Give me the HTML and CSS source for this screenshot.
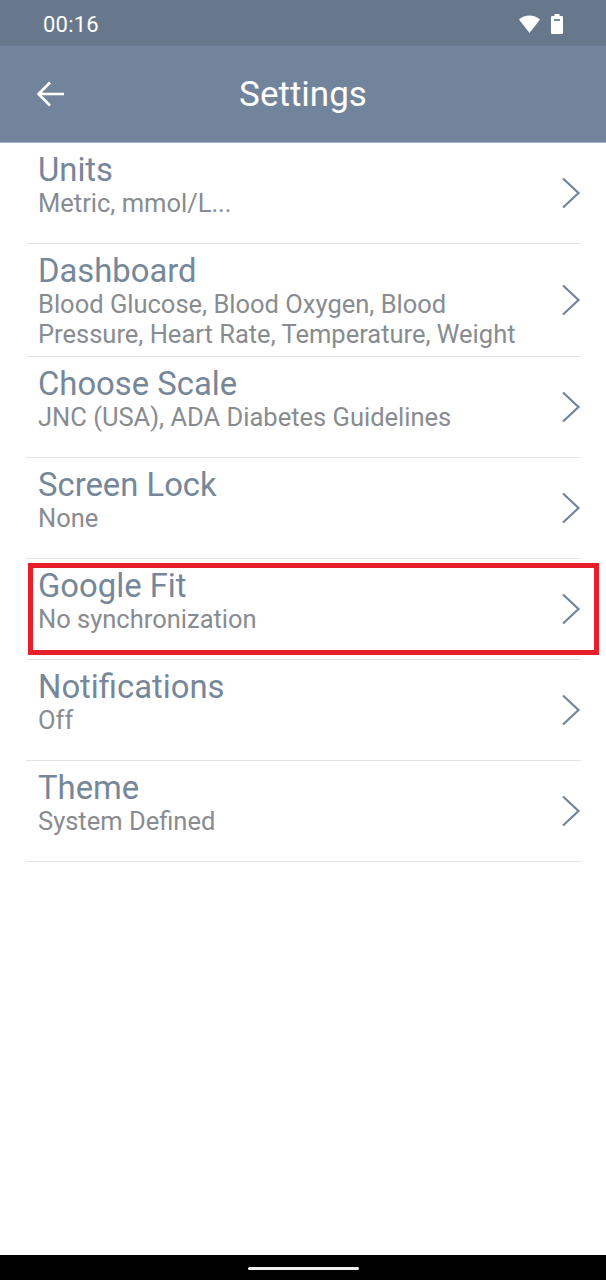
FILE: index.html
```html
<!DOCTYPE html>
<html lang="en">
<head>
<meta charset="utf-8">
<title>Settings</title>
<link rel="stylesheet" href="styles.css">
</head>
<body>
<div class="phone">
  <div class="status">
    <span class="time">00:16</span>
    <span class="status-icons">
      <svg class="wifi" width="21" height="18" viewBox="0 0 21 18"><path d="M0 4.5C3 1.8 6.600.5 10.500.5S18 1.800 21 4.500L10.500 18Z" fill="#fff"/></svg>
      <svg class="battery" width="12" height="20" viewBox="0 0 12 20"><path d="M3.500 0h5v2H11a1 1 0 0 1 1 1v16a1 1 0 0 1-1 1H1a1 1 0 0 1-1-1V3a1 1 0 0 1 1-1h2.500Z" fill="#fff"/><rect x="3" y="5" width="6" height="2" fill="#7d8b9d"/></svg>
    </span>
  </div>
  <header class="appbar">
    <svg class="back" width="30" height="28" viewBox="0 0 30 28"><path d="M28 14H3M14 2.500 2.500 14 14 25.500" fill="none" stroke="#fff" stroke-width="2.600"/></svg>
    <h1 class="title">Settings</h1>
  </header>
  <main class="list">
    <a class="row row-first"><div class="text"><div class="name">Units</div><div class="sub">Metric, mmol/L...</div></div><svg class="chev" width="20" height="32" viewBox="0 0 20 32"><path d="M2 1.500 17.500 16 2 30.500" fill="none" stroke="#72849a" stroke-width="2.200"/></svg></a>
    <a class="row row-tall"><div class="text"><div class="name">Dashboard</div><div class="sub">Blood Glucose, Blood Oxygen, Blood<br>Pressure, Heart Rate, Temperature, Weight</div></div><svg class="chev" width="20" height="32" viewBox="0 0 20 32"><path d="M2 1.500 17.500 16 2 30.500" fill="none" stroke="#72849a" stroke-width="2.200"/></svg></a>
    <a class="row"><div class="text"><div class="name">Choose Scale</div><div class="sub">JNC (USA), ADA Diabetes Guidelines</div></div><svg class="chev" width="20" height="32" viewBox="0 0 20 32"><path d="M2 1.500 17.500 16 2 30.500" fill="none" stroke="#72849a" stroke-width="2.200"/></svg></a>
    <a class="row"><div class="text"><div class="name">Screen Lock</div><div class="sub">None</div></div><svg class="chev" width="20" height="32" viewBox="0 0 20 32"><path d="M2 1.500 17.500 16 2 30.500" fill="none" stroke="#72849a" stroke-width="2.200"/></svg></a>
    <a class="row row-marked"><div class="text"><div class="name">Google Fit</div><div class="sub">No synchronization</div></div><svg class="chev" width="20" height="32" viewBox="0 0 20 32"><path d="M2 1.500 17.500 16 2 30.500" fill="none" stroke="#72849a" stroke-width="2.200"/></svg><span class="marker"></span></a>
    <a class="row"><div class="text"><div class="name">Notifications</div><div class="sub">Off</div></div><svg class="chev" width="20" height="32" viewBox="0 0 20 32"><path d="M2 1.500 17.500 16 2 30.500" fill="none" stroke="#72849a" stroke-width="2.200"/></svg></a>
    <a class="row"><div class="text"><div class="name">Theme</div><div class="sub">System Defined</div></div><svg class="chev" width="20" height="32" viewBox="0 0 20 32"><path d="M2 1.500 17.500 16 2 30.500" fill="none" stroke="#72849a" stroke-width="2.200"/></svg></a>
  </main>
  <footer class="navbar"><span class="pill"></span></footer>
</div>
</body>
</html>
```
FILE: styles.css
```css
* { box-sizing: border-box; }
html, body { margin: 0; padding: 0; background: #fff; }
.phone {
  width: 606px;
  height: 1280px;
  display: flex;
  flex-direction: column;
  font-family: Roboto, "Liberation Sans", sans-serif;
  overflow: hidden;
}
.status {
  height: 46px;
  flex: none;
  background: #68788c;
  display: flex;
  align-items: center;
  justify-content: space-between;
  padding: 6px 43px 4px 43px;
  color: #fff;
}
.time { font-size: 22px; font-weight: 400; letter-spacing: .2px; }
.status-icons { display: flex; align-items: center; gap: 11px; }
.wifi, .battery { display: block; }
.appbar {
  height: 97px;
  flex: none;
  background: #72849c;
  border-bottom: 1px solid #a9b4c2;
  display: flex;
  align-items: center;
  justify-content: center;
  position: relative;
}
.back { position: absolute; left: 36px; top: 34px; }
.title { margin: 1px 0 0; color: #fff; font-size: 35px; font-weight: 400; line-height: 1; }
.list { flex: 1; padding: 0 25px 0 26px; }
.row {
  height: 101px;
  display: flex;
  align-items: flex-start;
  justify-content: space-between;
  padding: 9px 0 0 12px;
  border-bottom: 1px solid #e4e4e4;
  position: relative;
}
.row-tall { height: 113px; }
.row-first { height: 101px; }
.name { color: #76879a; font-size: 32.800px; line-height: 36px; }
.sub { color: #888c91; font-size: 25.500px; line-height: 30px; }
.chev { position: absolute; right: 0; top: 34px; }
.row-tall .chev { top: 40px; }
.marker {
  position: absolute;
  left: 2px;
  right: -18px;
  top: 4px;
  height: 92px;
  border: 5px solid #e71f2b;
}
.navbar {
  height: 25px;
  flex: none;
  background: #000;
  display: flex;
  justify-content: center;
  padding-top: 12px;
}
.pill { width: 111px; height: 3px; background: #f0f0f0; border-radius: 2px; }
```
